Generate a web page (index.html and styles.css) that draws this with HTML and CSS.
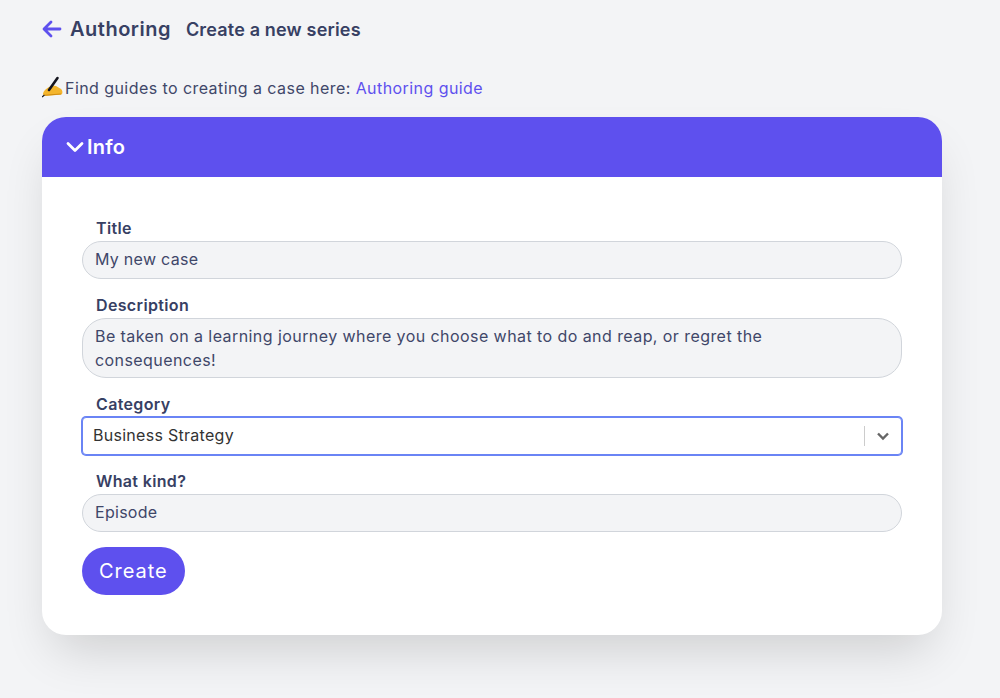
FILE: index.html
```html
<!DOCTYPE html>
<html lang="en">
<head>
<meta charset="utf-8">
<title>Authoring</title>
<link rel="stylesheet" href="styles.css">
</head>
<body>
<main class="page">
  <header class="topbar">
    <svg class="back" viewBox="0 0 20 18" width="20" height="18" aria-hidden="true"><path d="M9 2 2 9l7 7M2.500 9H18" fill="none" stroke="#5e50ee" stroke-width="2.800" stroke-linecap="round" stroke-linejoin="round"/></svg>
    <h1 class="title">Authoring</h1>
    <h2 class="subtitle">Create a new series</h2>
  </header>
  <p class="hint">
    <svg class="emoji" viewBox="0 0 22 22" width="22" height="22" aria-hidden="true"><path d="M1 17.500c.5-3 3.500-5 6-6.500l3.500-1.500 3.500.5 5 3c1.500 1 2 4.500.5 5.500L3.500 20c-1.500 0-2.700-1-2.500-2.500z" fill="#f4b52c"/><path d="M3 19.200 19 18" stroke="#d08c12" stroke-width="1"/><path d="M7 14 15.500 2" stroke="#15151f" stroke-width="2.600" stroke-linecap="round"/><path d="M0 21 2.500 19" stroke="#15151f" stroke-width="1.200"/></svg><span class="hint-text">Find guides to creating a case here: <a class="link" href="#">Authoring guide</a></span>
  </p>
  <section class="card">
    <div class="card-head">
      <svg viewBox="0 0 18 12" width="18" height="12" aria-hidden="true"><path d="M2 2.500 9 9.500l7-7" fill="none" stroke="#fff" stroke-width="2.800" stroke-linecap="round" stroke-linejoin="round"/></svg>
      <span class="card-title">Info</span>
    </div>
    <form class="form">
      <div class="field">
        <label class="label">Title</label>
        <div class="input">My new case</div>
      </div>
      <div class="field">
        <label class="label">Description</label>
        <div class="input area">Be taken on a learning journey where you choose what to do and reap, or regret the consequences!</div>
      </div>
      <div class="field">
        <label class="label">Category</label>
        <div class="select">
          <span class="select-value">Business Strategy</span>
          <span class="sep"></span>
          <svg class="caret" viewBox="0 0 14 9" width="14" height="9" aria-hidden="true"><path d="M2 1.500 7 6.500l5-5" fill="none" stroke="#666" stroke-width="2.400"/></svg>
        </div>
      </div>
      <div class="field">
        <label class="label">What kind?</label>
        <div class="input">Episode</div>
      </div>
      <div class="actions"><button class="btn" type="button">Create</button></div>
    </form>
  </section>
</main>
</body>
</html>
```
FILE: styles.css
```css
* { box-sizing: border-box; }
html, body { margin: 0; height: 100%; }
body {
  background: #f3f4f6;
  color: #374063;
  font-family: Inter, "Noto Sans", sans-serif;
  font-size: 16px;
  overflow: hidden;
}
.page { padding: 12px 58px 0 42px; }
.topbar { display: flex; align-items: center; height: 34px; }
.back { margin-right: 8px; }
.title { margin: 0 15px 0 0; font-size: 20px; line-height: 34px; font-weight: 600; letter-spacing: 0.5px; }
.subtitle { margin: 0; font-size: 18px; line-height: 34px; font-weight: 600; letter-spacing: 0.17px; padding-top: 1px; }
.hint { display: flex; align-items: center; height: 24px; margin: 30px 0 17px; }
.emoji { margin-right: 1px; flex: none; margin-top: -2px; }
.hint-text { font-size: 16px; line-height: 24px; color: #3f4769; letter-spacing: 0.43px; }
.link { color: #5e50ee; text-decoration: none; }
.card {
  background: #fff;
  border-radius: 24px;
  box-shadow: 0 25px 50px -12px rgba(0,0,0,.16);
  overflow: hidden;
}
.card-head {
  display: flex;
  align-items: center;
  gap: 3px;
  height: 60px;
  padding-left: 24px;
  background: #5e50ee;
  color: #fff;
}
.card-title { font-size: 20px; font-weight: 600; line-height: 28px; letter-spacing: 0.25px; }
.form { display: flex; flex-direction: column; gap: 15px; padding: 40px; }
.label { display: block; height: 24px; padding-left: 14px; font-weight: 600; line-height: 22px; letter-spacing: 0.35px; }
.input {
  min-height: 38px;
  padding: 5px 12px;
  background: #f3f4f6;
  border: 1px solid #d1d5db;
  border-radius: 19px;
  line-height: 24px;
  color: #3f4769;
  letter-spacing: 0.28px;
}
.area { min-height: 60px; border-radius: 24px; padding-right: 60px; letter-spacing: 0.43px; }
.select {
  display: flex;
  align-items: center;
  height: 38px;
  padding-left: 10px;
  background: #fff;
  border: 1px solid #6a84f5;
  box-shadow: 0 0 0 1px #6a84f5;
  border-radius: 4px;
  color: #333;
  letter-spacing: 0.28px;
}
.select-value { flex: 1; margin-top: -2px; }
.sep { width: 1px; height: 20px; background: #ccc; }
.caret { margin: 0 11px; }
.btn {
  display: block;
  height: 48px;
  padding: 0 17px;
  border: 0;
  border-radius: 24px;
  background: #5e50ee;
  color: #fff;
  font: 400 20px/28px Inter, "Noto Sans", sans-serif;
  letter-spacing: 0.95px;
}
```
